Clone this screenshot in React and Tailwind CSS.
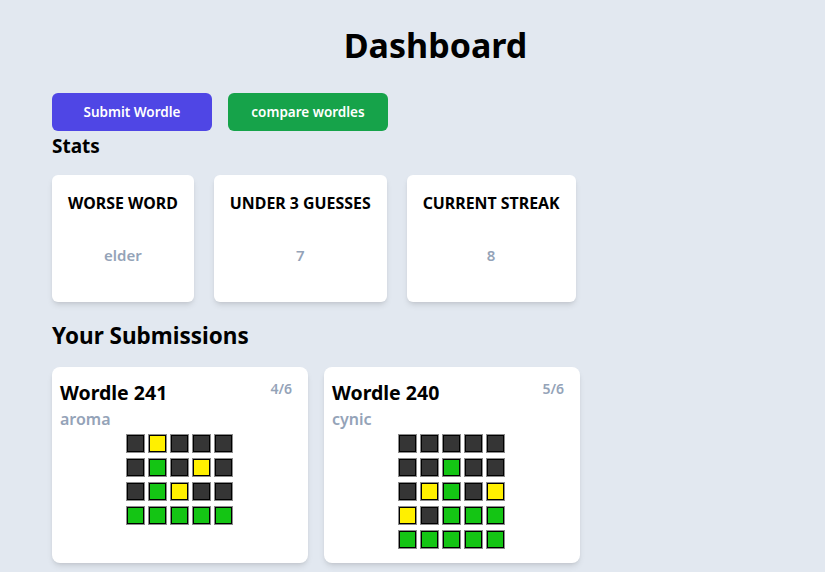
import React from "react";

const C = { D: "bg-[#353535]", Y: "bg-[#fff000]", G: "bg-[#14c514]" };

function Grid({ rows }) {
  return (
    <div className="flex flex-col items-center gap-[7px] mt-[4px]">
      {rows.map((r, i) => (
        <div key={i} className="flex gap-[5px]">
          {r.split("").map((c, j) => (
            <div
              key={j}
              className={`w-[17px] h-[17px] border border-black shadow-[0_0_0_1px_#8c8c8c] ${C[c]}`}
            />
          ))}
        </div>
      ))}
    </div>
  );
}

function Stat({ title, value }) {
  return (
    <div className="bg-white rounded-md shadow-md px-4 pt-4 h-[127px] flex flex-col items-center">
      <div className="text-[15.9px] leading-6 font-bold text-black">{title}</div>
      <div className="mt-7 text-[15px] leading-6 font-semibold text-[#94a3b8]">{value}</div>
    </div>
  );
}

function Sub({ n, word, score, rows }) {
  return (
    <div className="bg-white rounded-lg shadow-md w-[256px] pl-2 pr-4 pt-3 pb-[15px]">
      <div className="flex justify-between items-start">
        <div className="text-[19.5px] leading-7 font-bold text-black">Wordle {n}</div>
        <div className="text-sm leading-5 font-semibold text-[#94a3b8]">{score}</div>
      </div>
      <div className="text-base leading-6 font-semibold text-[#94a3b8]">{word}</div>
      <div className="pl-[6px]">
        <Grid rows={rows} />
      </div>
    </div>
  );
}

export default function App() {
  return (
    <div
      className="min-h-[572px] bg-[#e2e8f0] px-[52px] pt-[25px]"
      style={{ fontFamily: '"Noto Sans", "Open Sans", sans-serif' }}
    >
      <h1 className="text-[34px] leading-10 font-bold text-center pl-[46px] text-black">Dashboard</h1>
      <div className="flex gap-4 mt-[28px]">
        <button className="w-40 h-[38px] rounded-md bg-[#4f46e5] text-white text-[13.5px] font-semibold">
          Submit Wordle
        </button>
        <button className="w-40 h-[38px] rounded-md bg-[#16a34a] text-white text-[13.5px] font-semibold">
          compare wordles
        </button>
      </div>
      <h2 className="text-[19px] leading-7 font-bold mt-px text-black">Stats</h2>
      <div className="flex gap-5 mt-[15px]">
        <Stat title="WORSE WORD" value="elder" />
        <Stat title="UNDER 3 GUESSES" value="7" />
        <Stat title="CURRENT STREAK" value="8" />
      </div>
      <h2 className="text-[22.5px] leading-8 font-bold mt-[18px] text-black">Your Submissions</h2>
      <div className="flex gap-4 mt-[15px] items-stretch">
        <Sub n="241" word="aroma" score="4/6" rows={["DYDDD", "DGDYD", "DGYDD", "GGGGG"]} />
        <Sub n="240" word="cynic" score="5/6" rows={["DDDDD", "DDGDD", "DYGDY", "YDGGG", "GGGGG"]} />
      </div>
    </div>
  );
}
